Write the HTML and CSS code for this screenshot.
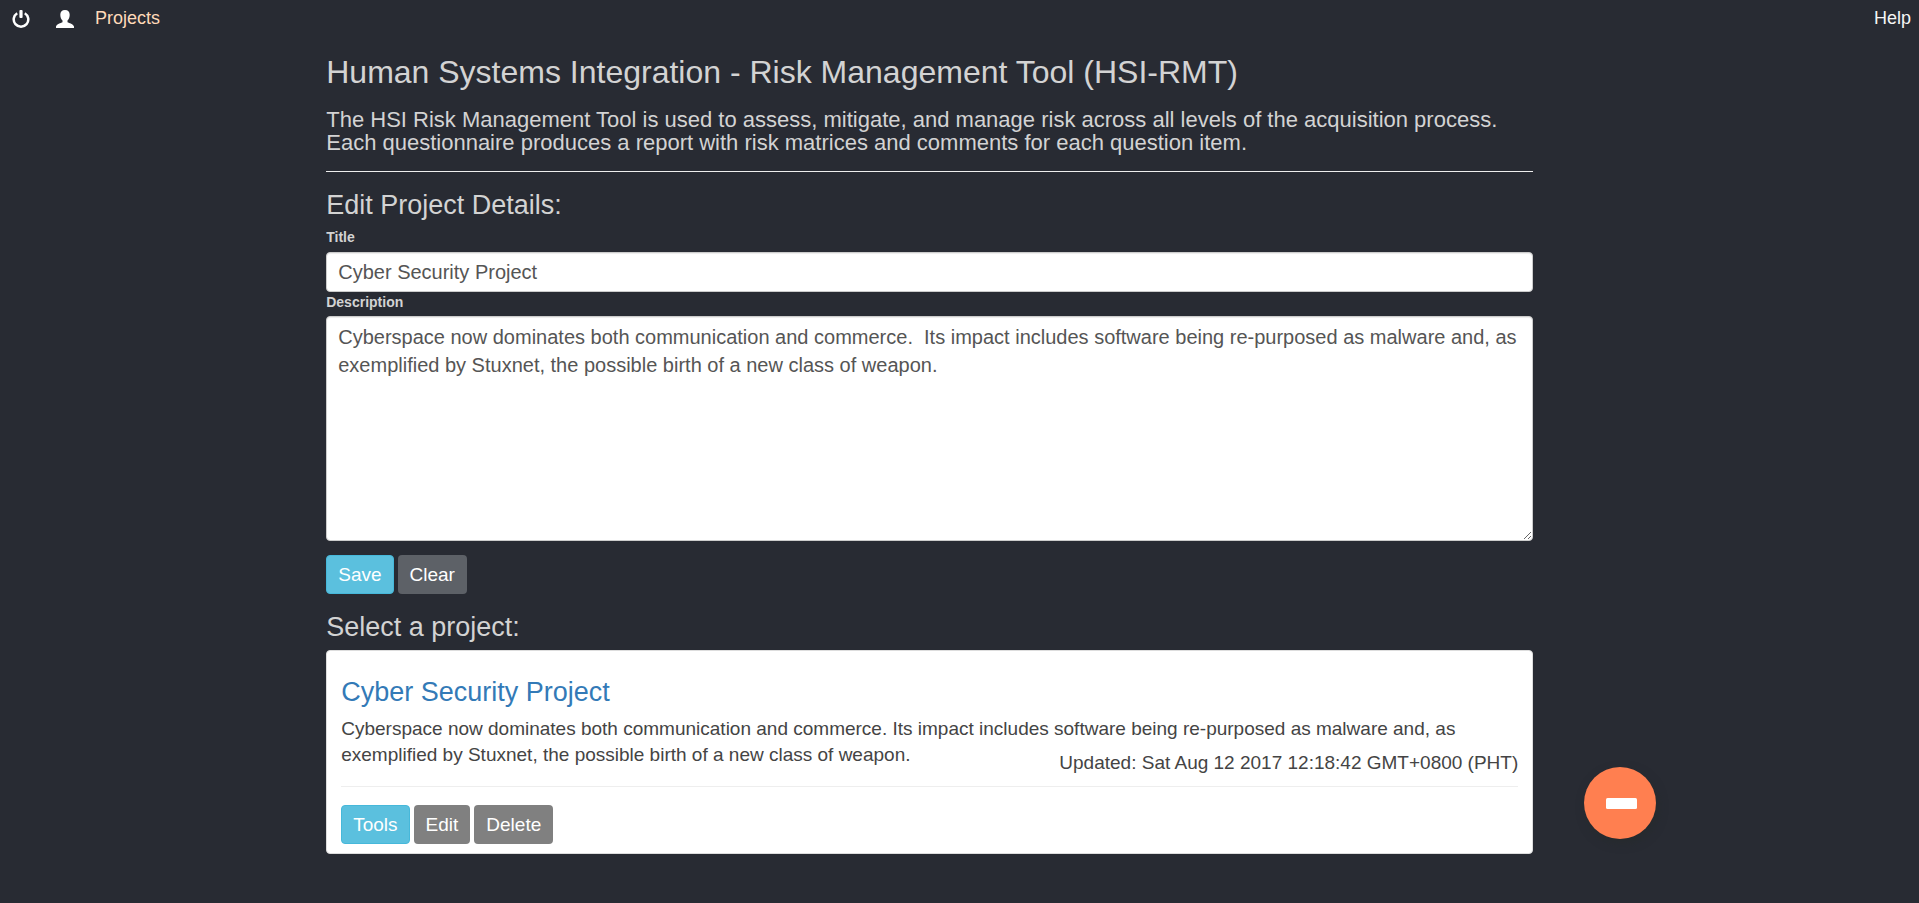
FILE: index.html
```html
<!DOCTYPE html>
<html lang="en">
<head>
<meta charset="utf-8">
<title>HSI-RMT Projects</title>
<link rel="stylesheet" href="styles.css">
</head>
<body>
<nav class="navbar">
  <div class="nav-group">
    <a href="#" class="nav-icon" aria-label="Log out"><svg width="18" height="18" viewBox="0 0 18 18"><path d="M5.200 3.200 A7.300 7.300 0 1 0 12.800 3.200" fill="none" stroke="#fff" stroke-width="2.500"/><rect x="7.400" y="0" width="3.200" height="8" rx="1" fill="#fff"/></svg></a>
    <a href="#" class="nav-icon" aria-label="Profile"><svg width="20" height="18" viewBox="0 0 20 18"><path d="M10 0c3 0 4.700 2 4.700 4.700 0 2.600-.9 4.600-2.200 5.800v1.800c1.600.8 6 2 6.500 4.200V18H1v-1.500c.5-2.200 4.900-3.400 6.500-4.200v-1.800C6.200 9.300 5.300 7.300 5.300 4.700 5.300 2 7 0 10 0z" fill="#fff"/></svg></a>
    <a href="#" class="nav-link active">Projects</a>
  </div>
  <a href="#" class="nav-link">Help</a>
</nav>
<main class="page">
  <header class="intro">
    <h1>Human Systems Integration - Risk Management Tool (HSI-RMT)</h1>
    <p>The HSI Risk Management Tool is used to assess, mitigate, and manage risk across all levels of the acquisition process. Each questionnaire produces a report with risk matrices and comments for each question item.</p>
  </header>
  <form class="project-form">
    <h2>Edit Project Details:</h2>
    <label for="title">Title</label>
    <input id="title" class="field" type="text" value="Cyber Security Project">
    <label for="description">Description</label>
    <textarea id="description" class="field area" spellcheck="false">Cyberspace now dominates both communication and commerce.  Its impact includes software being re-purposed as malware and, as exemplified by Stuxnet, the possible birth of a new class of weapon.</textarea>
    <div class="actions">
      <button type="button" class="btn info">Save</button>
      <button type="button" class="btn muted">Clear</button>
    </div>
  </form>
  <section class="projects">
    <h2>Select a project:</h2>
    <article class="card">
      <h3><a href="#">Cyber Security Project</a></h3>
      <div class="summary">
        <p>Cyberspace now dominates both communication and commerce. Its impact includes software being re-purposed as malware and, as exemplified by Stuxnet, the possible birth of a new class of weapon.</p>
        <p class="updated">Updated: Sat Aug 12 2017 12:18:42 GMT+0800 (PHT)</p>
      </div>
      <div class="actions">
        <button type="button" class="btn info">Tools</button>
        <button type="button" class="btn grey">Edit</button>
        <button type="button" class="btn grey">Delete</button>
      </div>
    </article>
  </section>
</main>
<button type="button" class="fab" aria-label="Hide project form"><svg width="31" height="11" viewBox="0 0 31 11"><rect width="31" height="11" rx="1.500" fill="#fff"/></svg></button>
</body>
</html>
```
FILE: styles.css
```css
* { box-sizing: border-box; }
body {
  margin: 0;
  min-height: 100vh;
  background: #282b33;
  color: #d3d3d3;
  font: 19px/26px "Liberation Sans", Arial, sans-serif;
}
h1, h2, h3, p { margin: 0; font-weight: 400; }
a { text-decoration: none; }
.navbar {
  display: flex;
  justify-content: space-between;
  align-items: center;
  height: 36px;
  padding: 0 8px 0 12px;
}
.nav-group { display: flex; align-items: center; }
.nav-icon { display: flex; margin-right: 25px; padding-top: 1px; }
.nav-icon + .nav-icon { margin-right: 20px; }
.nav-link { color: #f5f5f5; font-size: 18px; }
.nav-link.active { color: #ffdab9; }
.page { width: 62.9%; margin-left: 17%; }
.intro { padding: 18px 0 17px; border-bottom: 1px solid #eee; }
h1 { font-size: 32px; line-height: 36px; margin-bottom: 18px; }
.intro p { font-size: 22px; line-height: 23px; }
h2 { font-size: 27px; line-height: 32px; }
.project-form { padding-top: 17px; }
label {
  display: block;
  font-size: 14px;
  font-weight: 700;
  line-height: 20px;
}
h2 + label { margin: 6px 0 5px; }
.field + label { margin-bottom: 4px; }
.field {
  display: block;
  width: 100%;
  height: 40px;
  padding: 6px 11px;
  border: 1px solid #ccc;
  border-radius: 4px;
  background: #fff;
  box-shadow: inset 0 1px 1px rgba(0, 0, 0, .075);
  color: #555;
  font: 20px/28px "Liberation Sans", Arial, sans-serif;
}
.area { height: 225px; resize: vertical; }
.actions { display: flex; gap: 4px; }
.project-form .actions { padding-top: 14px; }
.btn {
  padding: 6px 11px;
  border: 1px solid transparent;
  border-radius: 4px;
  color: #fff;
  font: 19px/25px "Liberation Sans", Arial, sans-serif;
}
.info { background: #5bc0de; border-color: #46b8da; }
.muted { background: #5d6167; }
.grey { background: #808080; }
.projects { padding: 17px 0 48px; }
.card {
  margin-top: 7px;
  padding: 25px 14px 9px;
  border: 1px solid #ddd;
  border-radius: 4px;
  background: #fff;
  color: #444;
}
.card h3 { font-size: 27px; line-height: 32px; margin-bottom: 8px; }
.card a { color: #337ab7; }
.summary {
  position: relative;
  padding-bottom: 18px;
  margin-bottom: 18px;
  border-bottom: 1px solid #eee;
}
.updated { position: absolute; right: 0; bottom: 10px; }
.fab {
  position: fixed;
  right: 263px;
  bottom: 64px;
  display: flex;
  align-items: center;
  justify-content: center;
  width: 72px;
  height: 72px;
  padding: 0 0 0 3px;
  border: 0;
  border-radius: 50%;
  background: #ff7f50;
  box-shadow: 2px 4px 10px rgba(38, 42, 44, .8);
}
```
